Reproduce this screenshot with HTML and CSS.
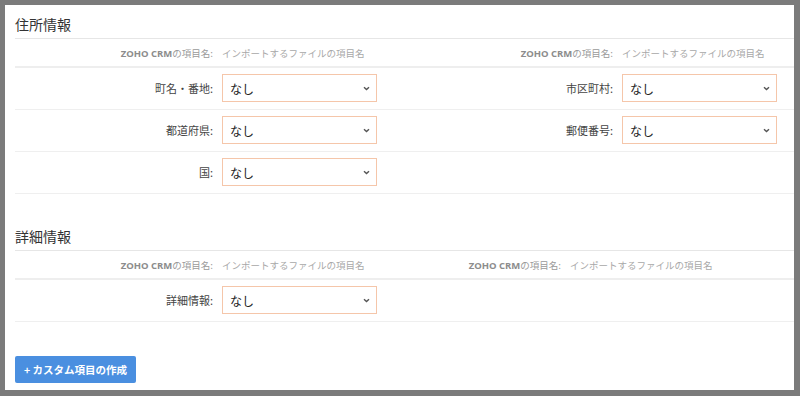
FILE: index.html
```html
<!DOCTYPE html>
<html>
<head>
    <title>インポート項目の関連付け</title>
    <link rel="stylesheet" href="styles.css">
</head>

<body>
    <div class="panel">
        <section class="block">
            <h2 class="block-title">住所情報</h2>
            <div class="row row-head">
                <div class="field">
                    <div class="field-label"><span class="brand">ZOHO CRM</span>の項目名:</div>
                    <div class="head-value">インポートするファイルの項目名</div>
                </div>
                <div class="field">
                    <div class="field-label"><span class="brand">ZOHO CRM</span>の項目名:</div>
                    <div class="head-value">インポートするファイルの項目名</div>
                </div>
            </div>
            <div class="row">
                <div class="field">
                    <div class="field-label">町名・番地:</div>
                    <div class="picker"><span>なし</span><svg width="7" height="5" viewBox="0 0 7 5"><path d="M1 1.2 L3.5 3.6 L6 1.2" fill="none" stroke="#555" stroke-width="1.4"/></svg></div>
                </div>
                <div class="field">
                    <div class="field-label">市区町村:</div>
                    <div class="picker"><span>なし</span><svg width="7" height="5" viewBox="0 0 7 5"><path d="M1 1.2 L3.5 3.6 L6 1.2" fill="none" stroke="#555" stroke-width="1.4"/></svg></div>
                </div>
            </div>
            <div class="row">
                <div class="field">
                    <div class="field-label">都道府県:</div>
                    <div class="picker"><span>なし</span><svg width="7" height="5" viewBox="0 0 7 5"><path d="M1 1.2 L3.5 3.6 L6 1.2" fill="none" stroke="#555" stroke-width="1.4"/></svg></div>
                </div>
                <div class="field">
                    <div class="field-label">郵便番号:</div>
                    <div class="picker"><span>なし</span><svg width="7" height="5" viewBox="0 0 7 5"><path d="M1 1.2 L3.5 3.6 L6 1.2" fill="none" stroke="#555" stroke-width="1.4"/></svg></div>
                </div>
            </div>
            <div class="row">
                <div class="field">
                    <div class="field-label">国:</div>
                    <div class="picker"><span>なし</span><svg width="7" height="5" viewBox="0 0 7 5"><path d="M1 1.2 L3.5 3.6 L6 1.2" fill="none" stroke="#555" stroke-width="1.4"/></svg></div>
                </div>
            </div>
        </section>

        <section class="block block-narrow">
            <h2 class="block-title">詳細情報</h2>
            <div class="row row-head">
                <div class="field">
                    <div class="field-label"><span class="brand">ZOHO CRM</span>の項目名:</div>
                    <div class="head-value">インポートするファイルの項目名</div>
                </div>
                <div class="field">
                    <div class="field-label"><span class="brand">ZOHO CRM</span>の項目名:</div>
                    <div class="head-value">インポートするファイルの項目名</div>
                </div>
            </div>
            <div class="row">
                <div class="field">
                    <div class="field-label">詳細情報:</div>
                    <div class="picker"><span>なし</span><svg width="7" height="5" viewBox="0 0 7 5"><path d="M1 1.2 L3.5 3.6 L6 1.2" fill="none" stroke="#555" stroke-width="1.4"/></svg></div>
                </div>
            </div>
        </section>

        <button class="add-btn" type="button">+ カスタム項目の作成</button>
    </div>
</body>

</html>
```

FILE: styles.css
```css
body {
    margin: 0;
    background-color: #7b7b7b;
    font-family: "Noto Sans CJK JP", "Noto Sans", sans-serif;
}

.panel {
    margin: 5px 6px 6px 5px;
    height: 385px;
    padding-left: 10px;
    box-sizing: border-box;
    background-color: #fff;
    overflow: hidden;
}

.block-narrow {
    margin-top: 23px;
}

.block-title {
    margin: 0;
    padding: 9px 0 4px;
    font-size: 14px;
    line-height: 20px;
    font-weight: normal;
    color: #333;
    border-bottom: 1px solid #e6e6e6;
}

.row {
    display: flex;
    padding: 6px 0 7px;
    border-bottom: 1px solid #efefef;
}

.row-head {
    height: 27px;
    padding: 0;
    align-items: center;
    border-bottom: 2px solid #eeeeee;
}

.field {
    flex: none;
    width: 400px;
    display: flex;
    align-items: center;
    gap: 9px;
}

.block-narrow .field {
    width: 348px;
}

.field-label {
    flex: none;
    width: 198px;
    text-align: right;
    font-size: 11px;
    color: #444;
}

.row-head .field-label {
    font-size: 9.5px;
    color: #9a9a9a;
}

.brand {
    font-family: "Open Sans", sans-serif;
    font-weight: bold;
    color: #8c8c8c;
}

.head-value {
    flex: none;
    white-space: nowrap;
    font-size: 9.5px;
    color: #a8a8a8;
}

.picker {
    flex: none;
    width: 155px;
    height: 28px;
    box-sizing: border-box;
    padding: 0 6px 0 7px;
    display: flex;
    align-items: center;
    justify-content: space-between;
    border: 1px solid #f5c6aa;
    font-size: 12px;
    color: #222;
}

.add-btn {
    margin-top: 34px;
    width: 121px;
    height: 27px;
    padding: 0;
    border: none;
    border-radius: 2px;
    background-color: #4a8fe0;
    color: #fff;
    font-family: "Noto Sans CJK JP", sans-serif;
    font-size: 10.5px;
    font-weight: bold;
}
```
